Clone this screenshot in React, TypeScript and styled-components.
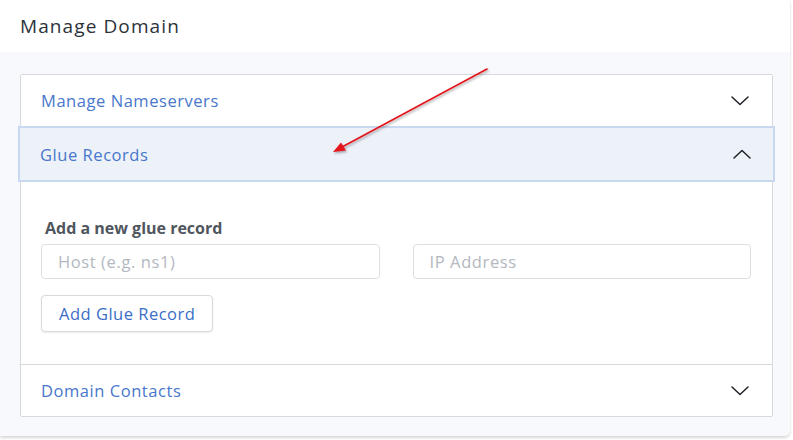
import React from "react"
import styled, { createGlobalStyle } from "styled-components"

const GlobalStyle = createGlobalStyle`
    html, body {
        margin: 0;
        padding: 0;
        background: #ffffff;
        font-family: "Open Sans", "Noto Sans", sans-serif;
    }
`

const Chevron = ({ up }: { up?: boolean }) => (
    <svg width="18" height="10" viewBox="0 0 18 10" fill="none">
        <path
            d={up ? "M1 9 L9 1.5 L17 9" : "M1 1 L9 8.5 L17 1"}
            stroke="#1f2328"
            strokeWidth="1.5"
            strokeLinecap="round"
            strokeLinejoin="round"
        />
    </svg>
)

const sections = [
    { title: "Manage Nameservers", open: false },
    { title: "Glue Records", open: true },
    { title: "Domain Contacts", open: false },
]

export default function App() {
    return (
        <>
            <GlobalStyle />
            <Page>
                <Card>
                    <CardHeader>Manage Domain</CardHeader>
                    <CardBody>
                        <Accordion>
                            {sections.map((s, i) => (
                                <Item key={s.title} $first={i === 0}>
                                    <ItemHeader $open={s.open}>
                                        <ItemTitle>{s.title}</ItemTitle>
                                        <Chevron up={s.open} />
                                    </ItemHeader>
                                    {s.open && (
                                        <ItemBody>
                                            <Label>Add a new glue record</Label>
                                            <InputRow>
                                                <Input placeholder="Host (e.g. ns1)" />
                                                <Input placeholder="IP Address" />
                                            </InputRow>
                                            <Button>Add Glue Record</Button>
                                        </ItemBody>
                                    )}
                                </Item>
                            ))}
                        </Accordion>
                    </CardBody>
                </Card>
                <Arrow width="793" height="440" viewBox="0 0 793 440">
                    <defs>
                        <filter id="sh" x="-10%" y="-10%" width="120%" height="120%">
                            <feDropShadow dx="1" dy="1.5" stdDeviation="1" floodColor="#000" floodOpacity="0.35" />
                        </filter>
                    </defs>
                    <g filter="url(#sh)">
                        <line x1="487" y1="69" x2="342" y2="147" stroke="#e3141c" strokeWidth="1.6" strokeLinecap="round" />
                        <polygon points="333,152 341,142.5 346,150.5" fill="#e3141c" />
                    </g>
                </Arrow>
            </Page>
        </>
    )
}

const Page = styled.div`
    position: relative;
    width: 793px;
    height: 440px;
    overflow: hidden;
`

const Arrow = styled.svg`
    position: absolute;
    left: 0;
    top: 0;
    pointer-events: none;
`

const Card = styled.div`
    width: 790px;
    border-radius: 0 0 6px 0;
    box-shadow: 0 2px 3px rgba(0, 0, 0, 0.16);
    overflow: hidden;
`

const CardHeader = styled.div`
    display: flex;
    align-items: center;
    height: 52px;
    padding-left: 20px;
    background: #ffffff;
    color: #2c323a;
    font-size: 19px;
    letter-spacing: 1.1px;
    font-weight: 500;
`

const CardBody = styled.div`
    background: #f7f9fc;
    padding: 22px 17px 19px 20px;
`

const Accordion = styled.div`
    border: 1px solid #d6d9de;
    border-radius: 2px;
    background: #ffffff;
`

const Item = styled.div<{ $first?: boolean }>`
    border-top: ${(p) => (p.$first ? "none" : "1px solid #d6d9de")};

    &:nth-child(2) {
        border-top: none;
    }
`

const ItemHeader = styled.div<{ $open?: boolean }>`
    display: flex;
    align-items: center;
    justify-content: space-between;
    height: ${(p) => (p.$open ? "52px" : "51px")};
    padding: ${(p) => (p.$open ? "0 22px 0 20px" : "0 23px 0 20px")};
    margin: ${(p) => (p.$open ? "0 -3px" : "0")};
    background: ${(p) => (p.$open ? "#edf1f8" : "#ffffff")};
    border: ${(p) => (p.$open ? "2px solid #c7d8f0" : "none")};
`

const ItemTitle = styled.span`
    color: #4777cc;
    font-size: 16.5px;
    letter-spacing: 0.55px;
`

const ItemBody = styled.div`
    padding: 35px 21px 32px 20px;
`

const Label = styled.div`
    padding-left: 4px;
    margin-bottom: 5px;
    color: #50565e;
    font-size: 16px;
    font-weight: 700;
`

const InputRow = styled.div`
    display: grid;
    grid-template-columns: 1fr 1fr;
    gap: 33px;
    margin-bottom: 16px;
`

const Input = styled.input`
    box-sizing: border-box;
    height: 35px;
    width: 100%;
    padding: 0 16px;
    border: 1px solid #dcdfe4;
    border-radius: 4px;
    font-family: inherit;
    font-size: 16.5px;
    letter-spacing: 0.6px;
    color: #333;

    &::placeholder {
        color: #b3b8c0;
    }
`

const Button = styled.button`
    height: 37px;
    padding: 0 17px;
    background: #ffffff;
    border: 1px solid #d7dade;
    border-radius: 4px;
    box-shadow: 0 1px 2px rgba(0, 0, 0, 0.08);
    color: #3a6ec6;
    font-family: inherit;
    font-size: 16.5px;
    letter-spacing: 0.5px;
    font-weight: 500;
`
